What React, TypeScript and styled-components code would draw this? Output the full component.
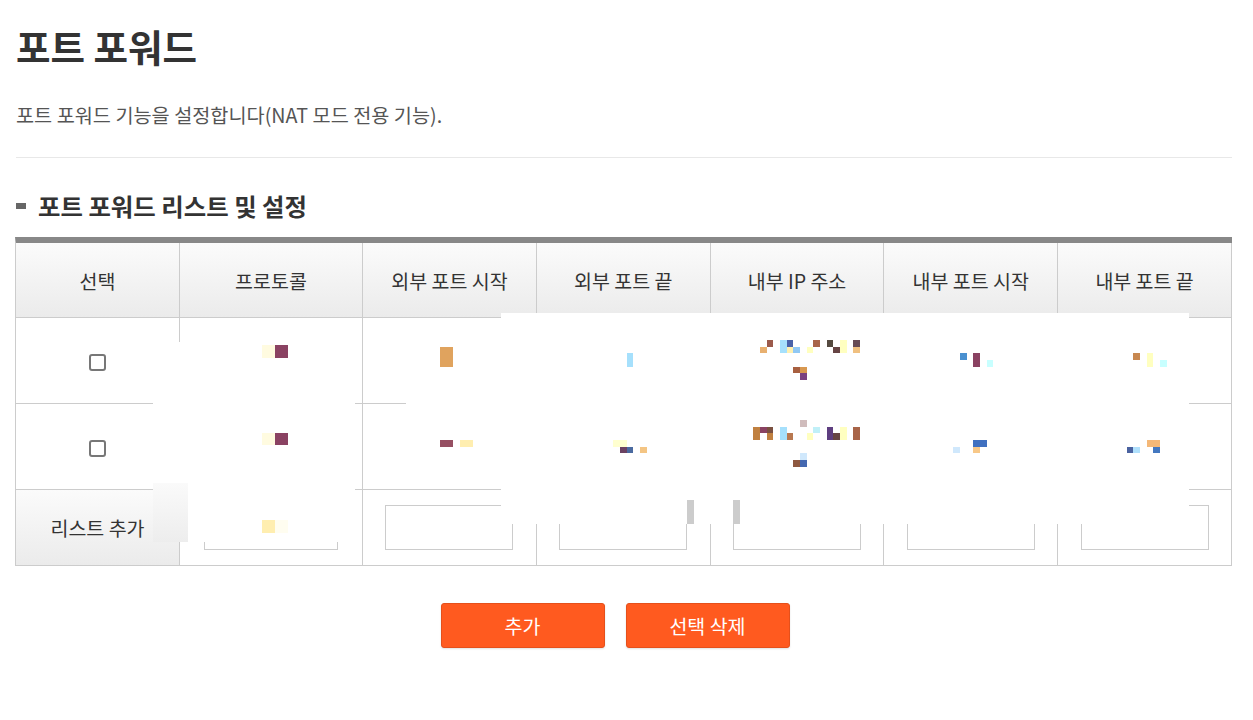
import styled, { createGlobalStyle } from "styled-components";

const GlobalStyle = createGlobalStyle`
  body {
    margin: 0;
    background: #fff;
    font-family: "Noto Sans CJK KR", "Noto Sans", sans-serif;
    color: #333;
  }
`;

const columns = ["선택", "프로토콜", "외부 포트 시작", "외부 포트 끝", "내부 IP 주소", "내부 포트 시작", "내부 포트 끝"];

// redaction noise left in the screenshot: [left, top, width, height, color], table coords
const marks: [number, number, number, number, string][] = [
  [247, 108, 13, 13, "#fffbe0"], [260, 108, 13, 13, "#8a4262"],
  [247, 196, 13, 12, "#fffbe0"], [260, 196, 13, 12, "#8a4262"],
  [247, 283, 13, 13, "#ffeeb0"], [260, 283, 13, 13, "#fffdf0"],
  [425, 110, 13, 20, "#e0a35e"],
  [425, 203, 13, 7, "#964f62"], [445, 203, 13, 7, "#ffeeb0"],
  [612, 116, 6, 14, "#a6e0fc"],
  [598, 203, 14, 7, "#ffffd0"], [605, 210, 7, 6, "#6b4262"], [612, 210, 6, 6, "#4a6aa0"], [625, 210, 7, 6, "#f4c584"],
  [752, 103, 6, 7, "#9b5a4c"], [745, 110, 7, 6, "#e8b070"], [765, 103, 7, 13, "#a6e0fc"],
  [772, 103, 6, 7, "#4a62a8"], [772, 110, 6, 6, "#fff0b0"], [778, 110, 7, 6, "#90c8f4"],
  [792, 110, 6, 6, "#ffffc0"], [798, 103, 7, 7, "#a86448"], [812, 103, 6, 7, "#554a40"],
  [818, 110, 7, 6, "#664444"], [825, 103, 7, 13, "#ffffc0"], [838, 103, 7, 7, "#664a55"],
  [838, 110, 7, 6, "#f0c080"], [778, 130, 7, 6, "#a86040"], [785, 130, 7, 6, "#d89850"],
  [785, 136, 7, 7, "#7a4080"],
  [738, 190, 7, 13, "#c08040"], [745, 190, 7, 6, "#8a4262"], [752, 190, 6, 6, "#7a5040"],
  [752, 196, 6, 7, "#c08040"], [765, 190, 7, 13, "#a6e0fc"], [772, 196, 6, 7, "#b87850"],
  [785, 183, 7, 7, "#d0bcbc"], [798, 190, 7, 6, "#c0f0f8"], [792, 196, 6, 7, "#ffffc0"],
  [812, 190, 6, 13, "#5e3e80"], [818, 196, 7, 7, "#664444"], [825, 190, 7, 13, "#ffffc0"],
  [838, 190, 7, 13, "#a86448"], [785, 216, 7, 7, "#d0e8fc"], [778, 223, 7, 7, "#8e5840"],
  [785, 223, 7, 7, "#4468b0"],
  [945, 116, 7, 7, "#4a90d0"], [958, 116, 7, 14, "#8a4262"], [972, 123, 6, 7, "#c8ffff"],
  [1118, 116, 7, 7, "#c88850"], [1132, 116, 6, 14, "#ffffc0"], [1145, 123, 7, 7, "#c8ffff"],
  [958, 203, 14, 7, "#4070c0"], [938, 210, 7, 6, "#d0e8fc"], [958, 210, 7, 6, "#f8c888"],
  [1132, 203, 13, 7, "#f4b878"], [1112, 210, 6, 6, "#4a62a0"], [1118, 210, 7, 6, "#b0e0fc"],
  [1138, 210, 7, 6, "#4478c0"],
];

const Page = styled.div`
  padding: 21px 21px 60px 15px;
`;

const Title = styled.h1`
  margin: 0;
  padding-left: 1px;
  font-size: 37.5px;
  line-height: 50px;
  font-weight: 700;
  color: #333;
`;

const Description = styled.p`
  margin: 31px 0 0;
  padding-left: 1px;
  font-size: 19.7px;
  line-height: 26px;
  color: #555;
`;

const Divider = styled.hr`
  margin: 29px 0 0 1px;
  border: 0;
  border-top: 1px solid #e8e8e8;
`;

const SectionTitle = styled.h2`
  margin: 33px 0 0;
  padding-left: 1px;
  display: flex;
  align-items: center;
  gap: 12px;
  font-size: 24.4px;
  line-height: 30px;
  font-weight: 700;
  color: #333;
  &::before {
    content: "";
    width: 10px;
    height: 6px;
    background: #666;
  }
`;

const TableWrap = styled.div`
  position: relative;
  margin-top: 16px;
`;

const Grid = styled.div`
  display: grid;
  grid-template-columns: 164px 183px repeat(5, 1fr);
  grid-template-rows: 75px 86px 86px 76px;
  border-top: 6px solid #888;
  border-left: 1px solid #ccc;
`;

const Cell = styled.div<{ $head?: boolean }>`
  display: flex;
  align-items: center;
  justify-content: center;
  border-right: 1px solid #ccc;
  border-bottom: 1px solid #ccc;
  font-size: 19.5px;
  color: #333;
  background: ${(p) => (p.$head ? "linear-gradient(#fbfbfb, #ebebeb)" : "#fff")};
`;

const Check = styled.input.attrs({ type: "checkbox" })`
  appearance: none;
  margin: 4px 0 0;
  width: 17px;
  height: 17px;
  border: 2px solid #777;
  border-radius: 3px;
  background: #fff;
`;

const Field = styled.input.attrs({ type: "text" })`
  box-sizing: border-box;
  width: 74%;
  height: 45px;
  border: 1px solid #ccc;
  background: #fff;
`;

const Mask = styled.div`
  position: absolute;
  background: #fff;
`;

const Shade = styled.div`
  position: absolute;
  background: linear-gradient(#fafafa, #ededed);
`;

const Stub = styled.div`
  position: absolute;
  width: 7px;
  background: #ccc;
`;

const Pixel = styled.span`
  position: absolute;
`;

const Actions = styled.div`
  display: flex;
  justify-content: center;
  gap: 21px;
  margin-top: 37px;
  padding-right: 17px;
`;

const Button = styled.button`
  width: 164px;
  height: 45px;
  border: 1px solid #e5501b;
  border-radius: 3px;
  background: #ff5a1f;
  color: #fff;
  font-family: inherit;
  font-size: 19.5px;
  box-shadow: 0 1px 2px rgba(0, 0, 0, 0.12);
`;

function App() {
  return (
    <Page>
      <GlobalStyle />
      <Title>포트 포워드</Title>
      <Description>포트 포워드 기능을 설정합니다(NAT 모드 전용 기능).</Description>
      <Divider />
      <SectionTitle>포트 포워드 리스트 및 설정</SectionTitle>
      <TableWrap>
        <Grid>
          {columns.map((c) => (
            <Cell $head key={c}>
              {c}
            </Cell>
          ))}
          {[0, 1].map((r) =>
            columns.map((c, i) => <Cell key={r + c}>{i === 0 && <Check />}</Cell>)
          )}
          <Cell $head>리스트 추가</Cell>
          {columns.slice(1).map((c) => (
            <Cell key={"add" + c}>
              <Field />
            </Cell>
          ))}
        </Grid>
        <Mask style={{ left: 138, top: 105, width: 202, height: 200 }} />
        <Shade style={{ left: 138, top: 246, width: 35, height: 59 }} />
        <Mask style={{ left: 391, top: 158, width: 95, height: 91 }} />
        <Mask style={{ left: 486, top: 76, width: 688, height: 211 }} />
        <Stub style={{ left: 672, top: 263, height: 24 }} />
        <Stub style={{ left: 718, top: 263, height: 24 }} />
        {marks.map(([l, t, w, h, c], i) => (
          <Pixel key={i} style={{ left: l, top: t, width: w, height: h, background: c }} />
        ))}
      </TableWrap>
      <Actions>
        <Button>추가</Button>
        <Button>선택 삭제</Button>
      </Actions>
    </Page>
  );
}

export default App;
